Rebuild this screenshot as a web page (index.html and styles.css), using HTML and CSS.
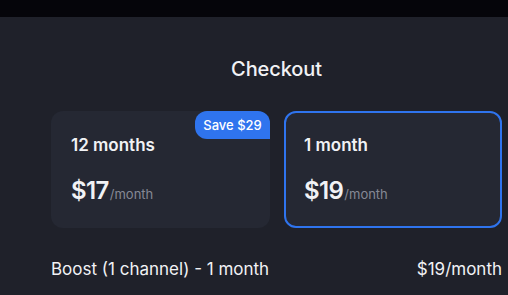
FILE: index.html
```html
<!DOCTYPE html>
<html>
<head>
<meta charset="utf-8">
<link rel="stylesheet" href="styles.css">
</head>
<body>
<div class="topbar"></div>
<main class="checkout">
  <h1 class="title">Checkout</h1>
  <div class="plans">
    <div class="plan">
      <span class="badge">Save $29</span>
      <div class="plan-name">12 months</div>
      <div class="plan-price"><span class="amount">$17</span><span class="per">/month</span></div>
    </div>
    <div class="plan plan-selected">
      <div class="plan-name">1 month</div>
      <div class="plan-price"><span class="amount">$19</span><span class="per">/month</span></div>
    </div>
  </div>
  <div class="summary">
    <span>Boost (1 channel) - 1 month</span>
    <span>$19/month</span>
  </div>
</main>
</body>
</html>
```
FILE: styles.css
```css
html, body {
  margin: 0;
  padding: 0;
  height: 100%;
  background: #1f212a;
  font-family: "Inter", "Noto Sans", sans-serif;
  color: #f1f2f5;
  overflow: hidden;
}
.topbar {
  height: 17px;
  background: #05050a;
}
.checkout {
  width: 451px;
  margin-left: 51px;
  padding-top: 40px;
}
.title {
  margin: 0;
  text-align: center;
  font-size: 20px;
  font-weight: 500;
  line-height: 25px;
  letter-spacing: -0.1px;
}
.plans {
  display: grid;
  grid-template-columns: 219px 218px;
  gap: 14px;
  margin-top: 29px;
}
.plan {
  position: relative;
  height: 117px;
  box-sizing: border-box;
  border: 2px solid transparent;
  border-radius: 12px;
  background: #252833;
  padding: 21px 18px;
}
.plan-selected {
  border-color: #2f74ee;
}
.badge {
  position: absolute;
  top: -2px;
  right: -2px;
  width: 75px;
  box-sizing: border-box;
  height: 28px;
  line-height: 28px;
  text-align: center;
  background: #2f74ee;
  color: #fff;
  font-size: 13px;
  font-weight: 500;
  border-radius: 12px 12px 0 12px;
}
.plan-name {
  font-size: 17px;
  font-weight: 600;
  line-height: 22px;
}
.plan-price {
  margin-top: 20px;
  display: flex;
  align-items: baseline;
}
.amount {
  font-size: 24px;
  font-weight: 600;
  line-height: 30px;
  letter-spacing: -0.6px;
}
.per {
  font-size: 13px;
  color: #858895;
  margin-left: 1px;
}
.summary {
  display: flex;
  justify-content: space-between;
  margin-top: 30px;
  font-size: 17px;
  line-height: 22px;
  font-weight: 400;
}
```
